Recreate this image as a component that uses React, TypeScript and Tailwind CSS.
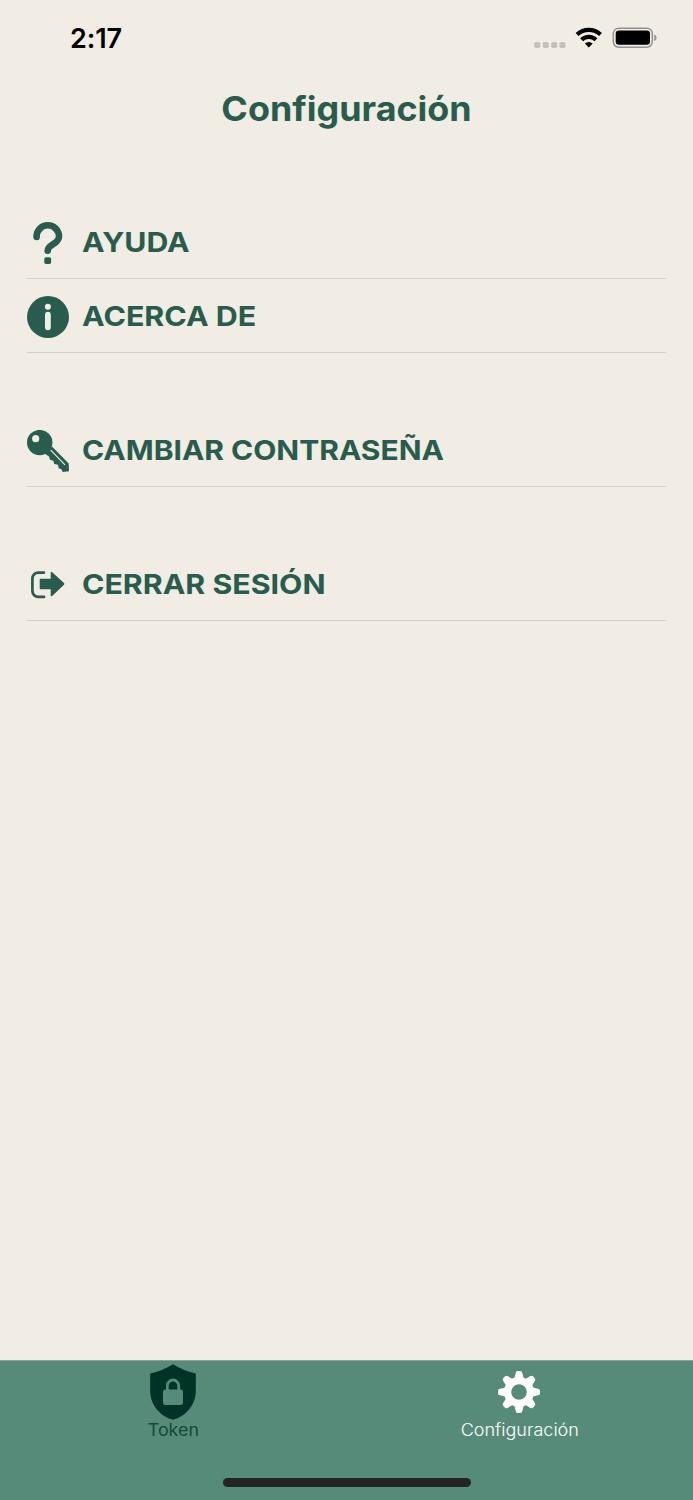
import type { ReactNode } from "react"

type RowProps = {
    icon: ReactNode
    label: string
    className: string
}

type TabProps = {
    icon: ReactNode
    label: string
    className: string
}

function StatusBar (){
    return(
        <div className="flex h-[76px] items-center justify-between pl-[70px] pr-[36px]">
            <span className="text-[27px] font-semibold leading-none text-black tracking-[-0.1px]">2:17</span>
            <svg width="123" height="22" viewBox="0 0 123 22">
                <g fill="#c4bfb9">
                    <rect x="0.3" y="15" width="5.9" height="5.9" rx="1.6"/>
                    <rect x="8.8" y="15" width="5.9" height="5.9" rx="1.6"/>
                    <rect x="17.2" y="15" width="5.9" height="5.9" rx="1.6"/>
                    <rect x="25.5" y="15" width="5.9" height="5.9" rx="1.6"/>
                </g>
                <g fill="none" stroke="#000" strokeWidth="4.2">
                    <path d="M43.1 7.6a17 17 0 0 1 23.4 0"/>
                    <path d="M47.6 12.8a10.3 10.3 0 0 1 14.400 0"/>
                </g>
                <path d="M54.8 20.5l-3.900-3.9a5.7 5.7 0 0 1 7.8 0z" fill="#000"/>
                <rect x="79.3" y="1.2" width="39" height="19" rx="5.4" fill="none" stroke="#95918c" strokeWidth="1.5"/>
                <rect x="81.7" y="3.6" width="34.3" height="14.2" rx="3.3" fill="#000"/>
                <path d="M120.3 7.4c3 1.2 3 5.4 0 6.6z" fill="#95918c"/>
            </svg>
        </div>
    )
}

function QuestionIcon (){
    return(
        <svg width="42" height="42" viewBox="0 0 42 42" className="shrink-0">
            <path d="M9.6 15V14.4A11.2 11.1 0 0 1 32 14.4C32 22 20.7 22.5 20.7 28.7" fill="none" stroke="currentColor" strokeWidth="6.6" strokeLinecap="round"/>
            <rect x="17.3" y="35.2" width="6.8" height="6.8" rx="1.7" fill="currentColor"/>
        </svg>
    )
}

function InfoIcon (){
    return(
        <svg width="42" height="42" viewBox="0 0 42 42" className="shrink-0">
            <circle cx="21" cy="21" r="21" fill="currentColor"/>
            <circle cx="20.9" cy="10.7" r="3" fill="#f1ece4"/>
            <rect x="18" y="15.7" width="5.8" height="18.5" rx="2.9" fill="#f1ece4"/>
        </svg>
    )
}

function KeyIcon (){
    return(
        <svg width="42" height="42" viewBox="0 0 42 42" className="shrink-0">
            <path d="M25 16.5L41.7 33.6L42 41.3L35.7 42L34.3 39.2L31.7 38.2L31 34.7L27.3 33.9L26.3 30.7L23 29.7L22 26.4L17.5 23.5Z" fill="currentColor"/>
            <circle cx="12.7" cy="12.6" r="12.7" fill="currentColor"/>
            <circle cx="8.7" cy="8.7" r="3.6" fill="#f1ece4"/>
            <path d="M23.7 20.2L38 34.8" stroke="#f1ece4" strokeWidth="1.2"/>
        </svg>
    )
}

function ExitIcon (){
    return(
        <svg width="42" height="42" viewBox="0 0 42 42" className="shrink-0">
            <path d="M17 8.6H11.5A6 6 0 0 0 5.4 14.6V26.9A6 6 0 0 0 11.5 32.9H17" fill="none" stroke="currentColor" strokeWidth="2.7" strokeLinecap="round"/>
            <path d="M13.7 14.8H23.7V8.7Q23.9 7.1 25.2 8.2L37 19.1Q37.8 20 37 20.8L25.2 31.9Q23.9 32.8 23.7 31.3V25.2H13.7Q12.7 25.2 12.7 24.2V15.8Q12.7 14.8 13.7 14.8Z" fill="currentColor"/>
        </svg>
    )
}

function ShieldIcon (){
    return(
        <svg width="46" height="56" viewBox="0 0 46 56">
            <path d="M23 0.3Q34 7.2 45.8 9.5V27C45.8 40.5 36 52.5 23 55.8C10 52.5 0.2 40.5 0.2 27V9.5Q12 7.2 23 0.3Z" fill="#003326"/>
            <path d="M17.3 27V21.7a5.7 5.7 0 0 1 11.4 0V27" fill="none" stroke="#568b7a" strokeWidth="2.8"/>
            <rect x="13" y="25.5" width="20" height="15.4" rx="2.6" fill="#568b7a"/>
        </svg>
    )
}

function GearIcon (){
    return(
        <svg width="42" height="42" viewBox="-21 -21 42 42" className="mr-[1px]">
            <g fill="#fff">
                {[0, 45, 90, 135, 180, 225, 270, 315].map((angle) => (
                    <path key={angle} transform={`rotate(${angle})`} d="M-4.8 -13L-3.3 -19Q-2.9 -21 -1.4 -21H1.4Q2.9 -21 3.3 -19L4.8 -13Z"/>
                ))}
            </g>
            <circle r="11.4" fill="none" stroke="#fff" strokeWidth="7.2"/>
        </svg>
    )
}

function Row ({icon, label, className}: RowProps){
    return(
        <div className="flex h-[74px] items-center gap-[13px] border-b border-[#d5d0ca] pt-[2px]">
            {icon}
            <span className={`origin-left whitespace-nowrap text-[27.5px] font-bold leading-none ${className}`}>{label}</span>
        </div>
    )
}

function Tab ({icon, label, className}: TabProps){
    return(
        <div className="flex flex-1 flex-col items-center pt-[2px]">
            <div className="flex h-[57px] items-center justify-center">{icon}</div>
            <span className={`text-[17px] leading-[21px] ${className}`}>{label}</span>
        </div>
    )
}

export default function App(){
    return(
        <div className="flex h-[1500px] w-[693px] flex-col overflow-hidden bg-[#f1ece4] font-['Inter',sans-serif] text-[#285c4d]">
            <StatusBar/>
            <h1 className="h-[129px] scale-x-[1.055] pt-[13px] text-center text-[34px] font-bold leading-[40px]">Configuración</h1>
            <div className="flex grow flex-col px-[27px]">
                <Row icon={<QuestionIcon/>} label="AYUDA" className="scale-x-[1.1]"/>
                <Row icon={<InfoIcon/>} label="ACERCA DE" className="scale-x-[1.105]"/>
                <div className="mt-[60px]">
                    <Row icon={<KeyIcon/>} label="CAMBIAR CONTRASEÑA" className="scale-x-[1.09]"/>
                </div>
                <div className="mt-[60px]">
                    <Row icon={<ExitIcon/>} label="CERRAR SESIÓN" className="scale-x-[1.103]"/>
                </div>
            </div>
            <div className="flex h-[140px] flex-col border-t border-[#8fa297] bg-[#568b7a]">
                <div className="flex">
                    <Tab icon={<ShieldIcon/>} label="Token" className="scale-x-[1.05] text-[#164638]"/>
                    <Tab icon={<GearIcon/>} label="Configuración" className="scale-x-[1.06] font-light text-white"/>
                </div>
                <div className="mx-auto mb-[13px] mt-auto h-[9px] w-[248px] rounded-full bg-[#242424]"/>
            </div>
        </div>
    )
}
